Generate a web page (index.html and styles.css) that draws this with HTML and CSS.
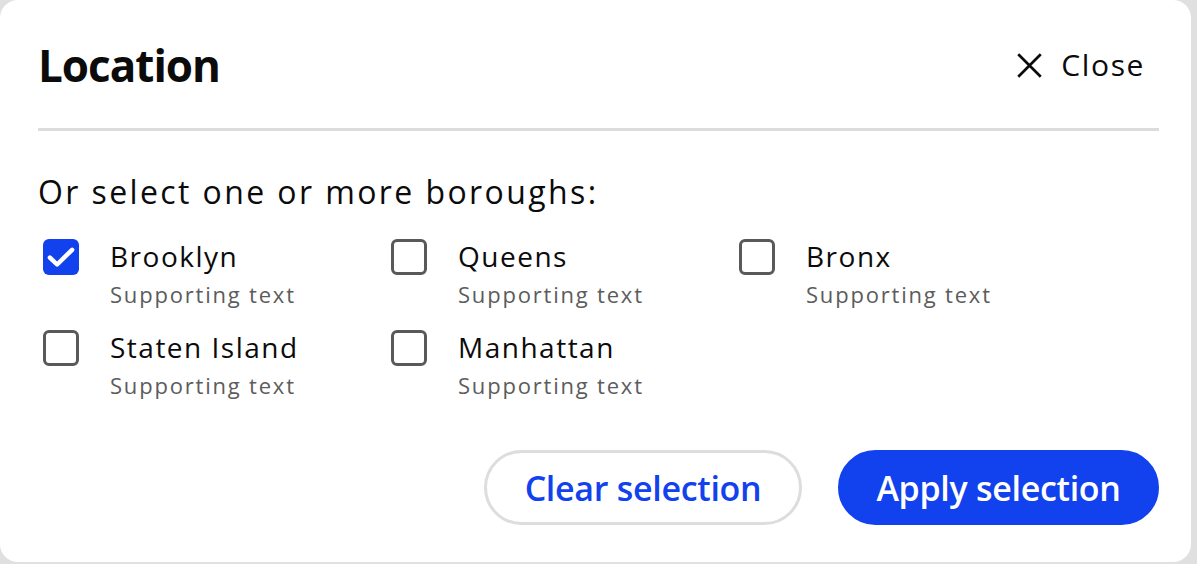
FILE: index.html
```html
<!DOCTYPE html>
<html lang="en">
<head>
    <meta charset="UTF-8">
    <meta name="viewport" content="width=device-width, initial-scale=1.0">
    <title>Location filter</title>
    <link rel="stylesheet" href="styles.css">
</head>
<body>
    <div class="dialog">
        <div class="dialog-header">
            <h2>Location</h2>
            <button type="button" class="close-button">
                <svg class="close-icon" viewBox="0 0 24 24" width="27" height="27" aria-hidden="true">
                    <path d="M2 2 L22 22 M22 2 L2 22" stroke="#0b0b0b" stroke-width="2.4" fill="none"/>
                </svg>
                Close
            </button>
        </div>

        <p class="prompt">Or select one or more boroughs:</p>

        <div class="borough-grid">
            <label class="borough">
                <span class="checkbox checked">
                    <svg viewBox="0 0 24 24" width="36" height="36" aria-hidden="true">
                        <polyline points="4.6,12.4 9.4,17 19.4,7.2" stroke="#fff" stroke-width="3" fill="none" stroke-linecap="round" stroke-linejoin="round"/>
                    </svg>
                </span>
                <span class="borough-text">
                    <span class="borough-name">Brooklyn</span>
                    <span class="borough-sub">Supporting text</span>
                </span>
            </label>
            <label class="borough">
                <span class="checkbox"></span>
                <span class="borough-text">
                    <span class="borough-name">Queens</span>
                    <span class="borough-sub">Supporting text</span>
                </span>
            </label>
            <label class="borough">
                <span class="checkbox"></span>
                <span class="borough-text">
                    <span class="borough-name">Bronx</span>
                    <span class="borough-sub">Supporting text</span>
                </span>
            </label>
            <label class="borough">
                <span class="checkbox"></span>
                <span class="borough-text">
                    <span class="borough-name">Staten Island</span>
                    <span class="borough-sub">Supporting text</span>
                </span>
            </label>
            <label class="borough">
                <span class="checkbox"></span>
                <span class="borough-text">
                    <span class="borough-name">Manhattan</span>
                    <span class="borough-sub">Supporting text</span>
                </span>
            </label>
        </div>

        <div class="actions">
            <button type="button" class="btn btn-outline">Clear selection</button>
            <button type="button" class="btn btn-primary">Apply selection</button>
        </div>
    </div>
</body>
</html>
```

FILE: styles.css
```css
body {
    margin: 0;
    background-color: #e0e0e0;
    font-family: "Open Sans", "Noto Sans", sans-serif;
    color: #0b0b0b;
}

.dialog {
    box-sizing: border-box;
    width: 1191px;
    height: 562px;
    padding: 0 32px 0 38px;
    background-color: #ffffff;
    border-radius: 18px;
}

.dialog-header {
    display: flex;
    align-items: center;
    justify-content: space-between;
    padding: 40px 0 38px;
    border-bottom: 3px solid #dcdcdc;
}

.dialog-header h2 {
    margin: 0;
    font-size: 44px;
    line-height: 50px;
    font-weight: 700;
    letter-spacing: -1px;
}

.close-button {
    display: flex;
    align-items: center;
    gap: 18px;
    margin-right: 14px;
    padding: 0;
    background: none;
    border: none;
    font-family: inherit;
    font-size: 30px;
    font-weight: 500;
    line-height: 36px;
    letter-spacing: 1.6px;
    color: #0b0b0b;
    cursor: pointer;
}

.close-icon {
    width: 27px;
    height: 27px;
}

.prompt {
    margin: 42px 0 0;
    font-size: 32px;
    line-height: 38px;
    letter-spacing: 2.4px;
}

.borough-grid {
    display: grid;
    grid-template-columns: repeat(3, 348px);
    row-gap: 23px;
    margin-top: 28px;
}

.borough {
    display: flex;
    align-items: flex-start;
    gap: 31px;
    padding-left: 5px;
    cursor: pointer;
}

.checkbox {
    box-sizing: border-box;
    flex: none;
    width: 36px;
    height: 36px;
    margin-top: 0;
    border: 3px solid #595959;
    border-radius: 6px;
}

.checkbox.checked {
    border: none;
    background-color: #1241ee;
}

.checkbox svg {
    display: block;
}

.borough-text {
    display: flex;
    flex-direction: column;
    gap: 8px;
}

.borough-name {
    font-size: 28px;
    line-height: 34px;
    letter-spacing: 1.5px;
}

.borough-sub {
    font-size: 22px;
    line-height: 26px;
    letter-spacing: 1.8px;
    color: #5c5c5c;
}

.actions {
    display: flex;
    justify-content: flex-end;
    gap: 36px;
    margin-top: 52px;
}

.btn {
    box-sizing: border-box;
    height: 75px;
    padding: 0;
    border-radius: 38px;
    font-family: inherit;
    font-size: 34px;
    font-weight: 600;
    letter-spacing: -0.3px;
    white-space: nowrap;
    cursor: pointer;
}

.btn-outline {
    width: 318px;
    background-color: #ffffff;
    border: 3px solid #dddddd;
    color: #1241ee;
}

.btn-primary {
    width: 321px;
    background-color: #1241ee;
    border: 3px solid #1241ee;
    color: #ffffff;
}
```
